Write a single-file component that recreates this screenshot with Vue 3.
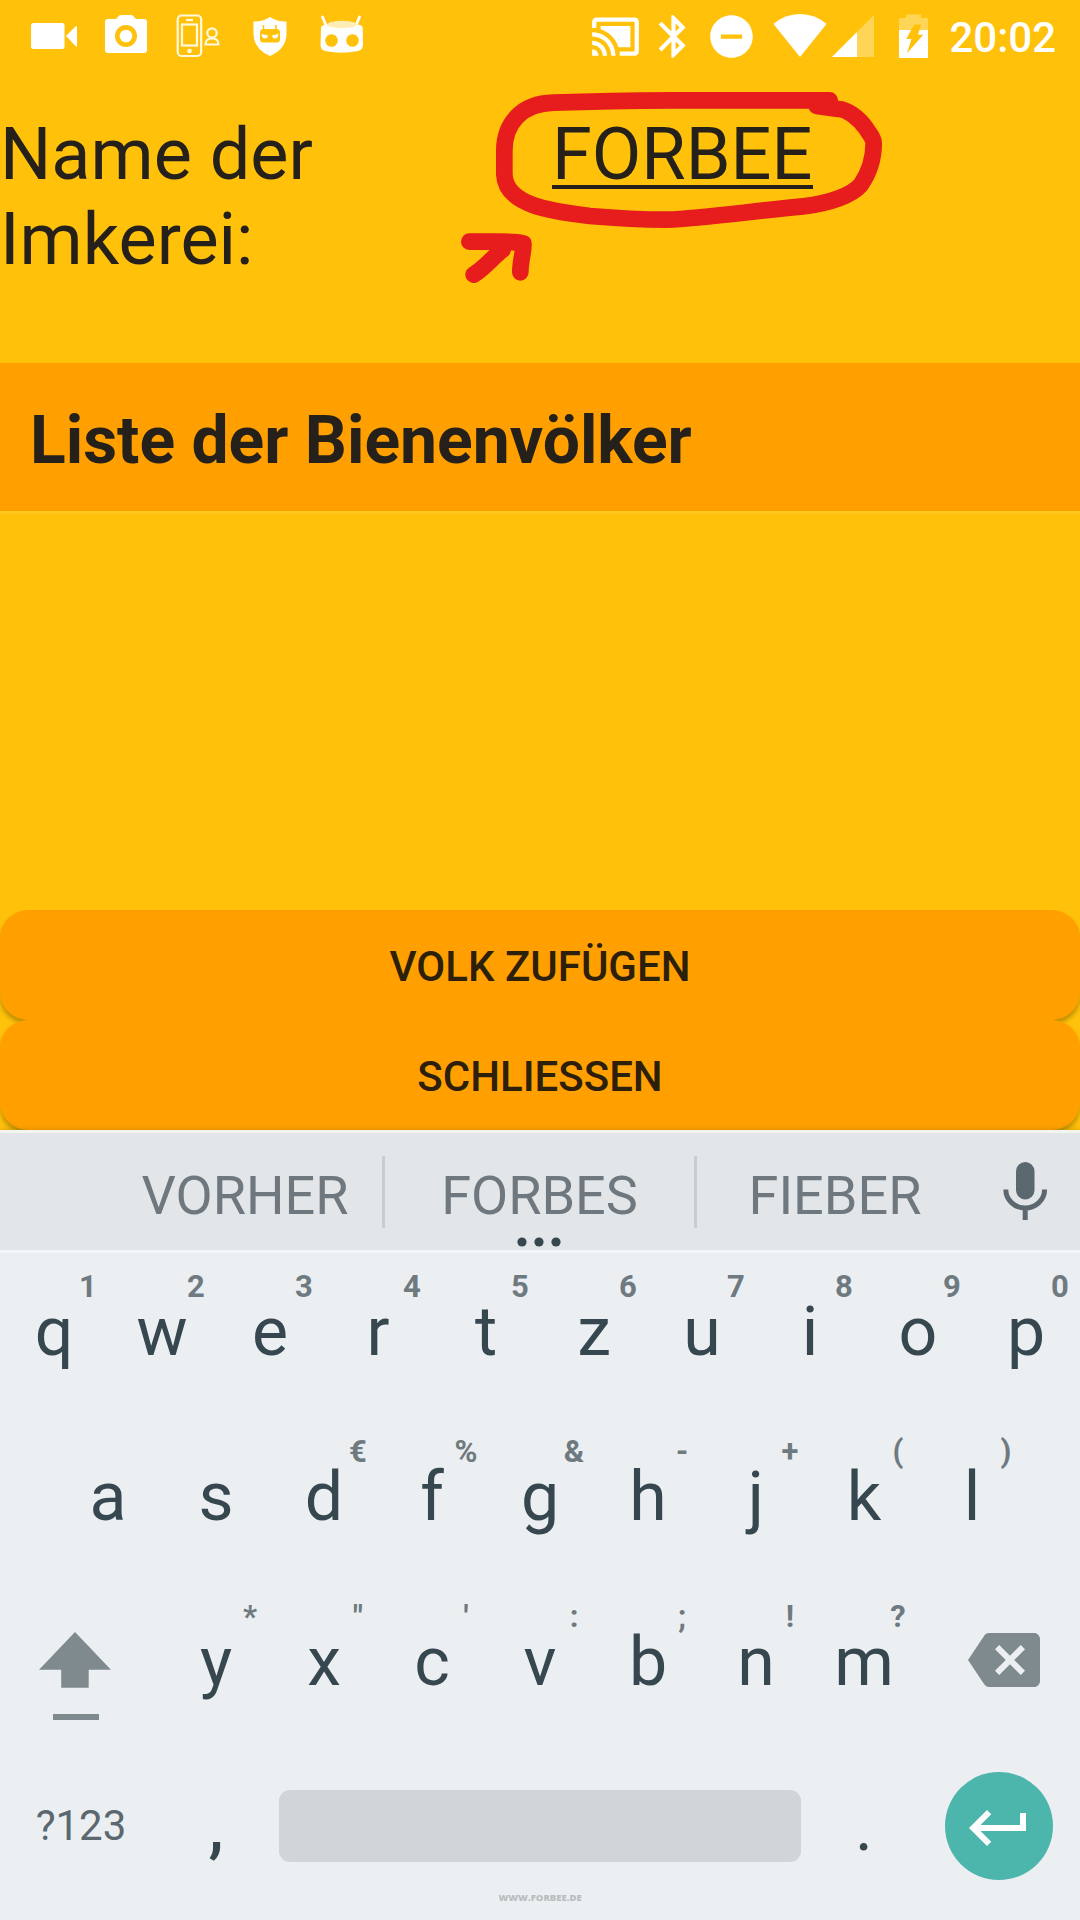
<script setup>
import { ref } from 'vue';

const name = ref("FORBEE");
const suggestions = ref(["VORHER", "FORBES", "FIEBER"]);

const topRow = [
  { key: "q", hint: "1" },
  { key: "w", hint: "2" },
  { key: "e", hint: "3" },
  { key: "r", hint: "4" },
  { key: "t", hint: "5" },
  { key: "z", hint: "6" },
  { key: "u", hint: "7" },
  { key: "i", hint: "8" },
  { key: "o", hint: "9" },
  { key: "p", hint: "0" }
];

const middleRow = [
  { key: "a", hint: "" },
  { key: "s", hint: "" },
  { key: "d", hint: "€" },
  { key: "f", hint: "%" },
  { key: "g", hint: "&" },
  { key: "h", hint: "-" },
  { key: "j", hint: "+" },
  { key: "k", hint: "(" },
  { key: "l", hint: ")" }
];

const bottomRow = [
  { key: "y", hint: "*" },
  { key: "x", hint: "\"" },
  { key: "c", hint: "'" },
  { key: "v", hint: ":" },
  { key: "b", hint: ";" },
  { key: "n", hint: "!" },
  { key: "m", hint: "?" }
];

function pick(word) {
  name.value = word;
}

function type(letter) {
  name.value += letter;
}

function erase() {
  name.value = name.value.slice(0, -1);
}
</script>

<template>
<div class="screen">
  <header class="status">
    <div class="notifications">
      <svg viewBox="18 0 72 72">
        <rect x="31" y="23" width="33.500" height="26" rx="2.500" />
        <path d="M66 36 75.500 26.500Q77 25.500 77 27V45.500Q77 47.500 75.500 46Z" />
      </svg>
      <svg viewBox="90 0 72 72">
        <path fill-rule="evenodd" d="M108 19h8l3-3.200q.8-.8 2-.8h10q1.200 0 2 .8l3 3.200h8q3 0 3 3v28q0 3-3 3h-36q-3 0-3-3V22q0-3 3-3zM126 25a11 11 0 1 0 0 22 11 11 0 1 0 0-22z" />
        <circle cx="126" cy="36" r="6.300" />
      </svg>
      <svg class="line" viewBox="162 0 72 72">
        <rect x="177.700" y="15.500" width="23.500" height="40.500" rx="4" />
        <rect x="182" y="24.500" width="15" height="21" />
        <path d="M186 20h7" />
        <circle class="solid" cx="189.500" cy="51" r="2.300" />
        <circle cx="212" cy="33" r="4.700" />
        <path d="M205.500 44.500q0-6 6.500-6t6.500 6z" />
      </svg>
      <svg viewBox="234 0 72 72">
        <path d="M270 17q8 5 16.500 4.500v13Q286 49 270 56 254 49 253.500 34.500v-13Q262 22 270 17z" />
        <path class="cut" d="M263.500 25v5M276 25v5" />
        <rect class="hole" x="260" y="29" width="20" height="13.500" rx="3.500" />
        <path d="M261.500 34l6.500 1.500q-.5 3-3 3-3 0-3.500-4.500zM278.500 34l-6.500 1.500q.5 3 3 3 3 0 3.500-4.500z" />
      </svg>
      <svg viewBox="306 0 72 72">
        <path d="M322.500 17l4 9.500M359.500 17l-4 9.500" stroke="#fff" stroke-width="2.800" stroke-linecap="round" />
        <path d="M321 28q0-2.500 4-3.200 17-3.500 34 0 3.500.7 3.700 3.200l.3 17q0 5-5 6-17 3.500-33 0-4.500-1-4.500-6z" />
        <ellipse cx="342" cy="24.500" rx="15" ry="3.700" fill="#ffedb5" />
        <circle class="hole" cx="331.500" cy="40.500" r="6.300" />
        <circle class="hole" cx="352.500" cy="40.500" r="6.300" />
      </svg>
    </div>

    <div class="system">
      <svg class="icon" viewBox="0 0 24 24">
        <path d="M1 18v3h3c0-1.660-1.340-3-3-3zm0-4v2c2.760 0 5 2.240 5 5h2c0-3.870-3.130-7-7-7zm18-7H5v1.630c3.960 1.280 7.090 4.410 8.370 8.370H19V7zM1 10v2c4.970 0 9 4.030 9 9h2c0-6.080-4.930-11-11-11zm20-7H3c-1.100 0-2 .9-2 2v3h2V5h18v14h-7v2h7c1.100 0 2-.9 2-2V5c0-1.100-.9-2-2-2z" />
      </svg>
      <svg class="icon" viewBox="0 0 24 24">
        <path d="M17.710 7.710L12 2h-1v7.590L6.410 5 5 6.410 10.590 12 5 17.590 6.410 19 11 14.410V22h1l5.710-5.710-4.300-4.290 4.300-4.290zM13 5.830l1.880 1.880L13 9.590V5.830zm1.880 10.460L13 18.170v-3.760l1.880 1.880z" />
      </svg>
      <svg class="icon" viewBox="0 0 24 24">
        <path d="M12 2C6.480 2 2 6.480 2 12s4.480 10 10 10 10-4.480 10-10S17.520 2 12 2zm5 11H7v-2h10v2z" />
      </svg>
      <svg class="wifi" viewBox="0 0 54 72">
        <path d="M27 57L.5 24Q12 14 27 14t26.500 10z" />
      </svg>
      <svg class="signal" viewBox="0 0 42 72">
        <path d="M42 15v42H0z" opacity=".32" />
        <path d="M25 32v25H0z" />
      </svg>
      <svg class="battery" viewBox="0 0 29 72">
        <path d="M0 18h7v-3.500h15V18h7v12h-8.600l1.600-5.500h-6.700L12.100 30H0z" opacity=".32" />
        <path d="M0 30h12.100L7.300 39h5.200L8 53.300l16.300-18.600H19l1.400-4.700H29v28H0z" />
      </svg>
      <span class="clock">20:02</span>
    </div>
  </header>

  <section class="form">
    <label>Name der Imkerei:</label>
    <div class="field"><span class="value">{{ name }}</span></div>
    <!-- red pen marks around the name -->
    <svg class="marker" viewBox="0 0 1380 660">
      <path d="M1169 61H700C560 62 430 65 340 68 245 70 193 130 193 212V283C196 375 330 394 450 408 530 415 600 419 680 419 790 415 930 394 1090 379 1170 370 1235 346 1262 315 1285 282 1301 245 1301 190 1301 172 1290 165 1278 145 1255 112 1220 88 1195 87L1130 78" />
      <path d="M88 485H180Q225 485 250 490C252 515 241 540 241 577M101 584C135 563 160 530 188 509" />
    </svg>
  </section>

  <h1>Liste der Bienenvölker</h1>
  <div class="list"></div>

  <div class="actions">
    <button>VOLK ZUFÜGEN</button>
    <button>SCHLIESSEN</button>
  </div>

  <div class="suggestions">
    <div v-for="word in suggestions" :key="word" class="word" @click="pick(word)">{{ word }}</div>
    <svg class="mic" viewBox="0 0 60 72">
      <rect x="22" y="6" width="18.500" height="37.500" rx="9.200" />
      <path d="M11.800 33.500a19.400 18.500 0 0 0 38.800 0M31.200 52v12" />
    </svg>
    <svg class="more" viewBox="0 0 44 10">
      <circle cx="5" cy="5" r="4.600" />
      <circle cx="22" cy="5" r="4.600" />
      <circle cx="39" cy="5" r="4.600" />
    </svg>
  </div>

  <div class="keyboard">
    <div class="row">
      <div v-for="item in topRow" :key="item.key" class="key" @click="type(item.key)">
        <span class="hint">{{ item.hint }}</span>
        <span class="letter">{{ item.key }}</span>
      </div>
    </div>
    <div class="row">
      <div v-for="item in middleRow" :key="item.key" class="key" @click="type(item.key)">
        <span class="hint">{{ item.hint }}</span>
        <span class="letter">{{ item.key }}</span>
      </div>
    </div>
    <div class="row">
      <div class="wide">
        <svg class="shift" viewBox="0 0 72 90">
          <path d="M36 0l36 37.700H49.700v18h-27.500v-18H0zM14 82h46v6H14z" />
        </svg>
      </div>
      <div v-for="item in bottomRow" :key="item.key" class="key" @click="type(item.key)">
        <span class="hint">{{ item.hint }}</span>
        <span class="letter">{{ item.key }}</span>
      </div>
      <div class="wide" @click="erase">
        <svg class="erase" viewBox="0 0 24 24">
          <path d="M22 3H7c-.69 0-1.230.35-1.590.88L0 12l5.410 8.110c.36.53.9.89 1.590.89h15c1.100 0 2-.9 2-2V5c0-1.100-.9-2-2-2zm-3 12.590L17.590 17 14 13.410 10.410 17 9 15.590 12.590 12 9 8.410 10.410 7 14 10.590 17.590 7 19 8.410 15.410 12 19 15.590z" />
        </svg>
      </div>
    </div>
    <div class="row">
      <div class="wide symbols">?123</div>
      <div class="key">
        <span class="hint"></span>
        <span class="letter comma">,</span>
      </div>
      <div class="space"></div>
      <div class="key">
        <span class="hint"></span>
        <span class="letter">.</span>
      </div>
      <div class="wide">
        <div class="enter">
          <svg viewBox="0 0 24 24">
            <path d="M19 7v4H5.830l3.580-3.590L8 6l-6 6 6 6 1.410-1.410L5.830 13H21V7z" />
          </svg>
        </div>
      </div>
    </div>
    <footer>WWW.FORBEE.DE</footer>
  </div>
</div>
</template>

<style>
body {
  margin: 0;
  background: #ffc10a;
}
</style>

<style scoped>
.screen {
  display: flex;
  flex-direction: column;
  width: 1080px;
  height: 1920px;
  overflow: hidden;
  background: #ffc10a;
  color: #25211a;
  font-family: Roboto, "Liberation Sans", sans-serif;
}

.status {
  display: flex;
  justify-content: space-between;
  height: 72px;
  padding: 0 24px 0 18px;
}

.status svg {
  fill: #fff;
}

.notifications {
  display: flex;
}

.notifications svg {
  width: 72px;
  height: 72px;
}

.notifications .line {
  fill: none;
  stroke: #fffadf;
  stroke-width: 2.2;
}

.notifications .solid {
  fill: #fffadf;
  stroke: none;
}

.notifications .hole {
  fill: #ffc10a;
}

.notifications .cut {
  stroke: #ffc10a;
  stroke-width: 1.5;
}

.system {
  display: flex;
  align-items: center;
}

.system .icon {
  width: 51px;
  height: 51px;
  margin-right: 7px;
}

.system .wifi {
  width: 54px;
  height: 72px;
  margin: 0 5px 0 9px;
}

.system .signal {
  width: 42px;
  height: 72px;
  margin-right: 25px;
}

.system .battery {
  width: 29px;
  height: 72px;
  margin-right: 21px;
}

.clock {
  padding-top: 4px;
  color: #fff;
  font-size: 42px;
  font-weight: 500;
  line-height: 50px;
}

.form {
  position: relative;
  display: grid;
  grid-template-columns: 540px 1fr;
  height: 251px;
  padding-top: 40px;
  box-sizing: border-box;
  font-size: 72px;
  line-height: 85px;
}

.form label {
  width: 400px;
}

.field {
  padding-left: 12px;
}

.value {
  display: inline-block;
  height: 73px;
  padding-right: 1px;
  border-bottom: 4px solid #25211a;
}

.marker {
  position: absolute;
  left: 440px;
  top: 8px;
  width: 460px;
  height: 220px;
  fill: none;
  stroke: #e71c1c;
  stroke-width: 50;
  stroke-linecap: round;
  stroke-linejoin: round;
}

h1 {
  height: 148px;
  margin: 40px 0 0;
  padding: 39px 30px 0;
  box-sizing: border-box;
  background: #ffa000;
  font-size: 66px;
  font-weight: 700;
  line-height: 78px;
}

.list {
  flex: 1;
  border-top: 3px solid #ffc61c;
}

.actions {
  display: flex;
  flex-direction: column;
  overflow: hidden;
}

button {
  height: 110px;
  padding: 3px 0 0;
  border: 0;
  border-radius: 28px;
  background: #ffa000;
  box-shadow: 0 4px 4px rgba(90, 70, 0, 0.4);
  color: #2d200b;
  font-family: inherit;
  font-size: 42px;
  font-weight: 500;
  line-height: 50px;
}

.suggestions {
  position: relative;
  display: grid;
  grid-template-columns: 277px 312px 276px 1fr;
  align-items: center;
  height: 123px;
  padding-left: 108px;
  box-sizing: border-box;
  border-top: 3px solid #f4f4ef;
  border-bottom: 3px solid #f4f7fa;
  background: #e3e6e9;
  box-shadow: 0 -1px 5px rgba(0, 0, 0, 0.12);
}

.word {
  height: 72px;
  border-right: 3px solid #c9cdd0;
  color: #6e787e;
  font-size: 54px;
  line-height: 79px;
  text-align: center;
}

.word:nth-child(3) {
  border-right: 0;
}

.mic {
  width: 60px;
  height: 72px;
  margin-left: 21px;
  fill: #5b686f;
}

.mic path {
  fill: none;
  stroke: #5b686f;
  stroke-width: 5;
}

.more {
  position: absolute;
  left: 517px;
  bottom: 3px;
  width: 44px;
  height: 10px;
  fill: #37474f;
}

.keyboard {
  position: relative;
  height: 667px;
  background: #ebeff2;
  color: #37474f;
}

.row {
  display: flex;
  justify-content: center;
  height: 165px;
}

.key {
  display: flex;
  flex-direction: column;
  width: 108px;
  padding-top: 16px;
  box-sizing: border-box;
}

.hint {
  align-self: flex-end;
  width: 40px;
  height: 36px;
  color: #6f7a80;
  font-size: 31px;
  font-weight: 700;
  line-height: 36px;
  text-align: center;
}

.letter {
  margin-top: -13px;
  font-size: 68px;
  line-height: 80px;
  text-align: center;
}

.comma {
  font-weight: 500;
}

.wide {
  width: 162px;
}

.shift {
  display: block;
  width: 72px;
  height: 90px;
  margin: 49px 0 0 39px;
  fill: #7f8a8e;
}

.erase {
  display: block;
  width: 72px;
  height: 72px;
  margin: 41px 0 0 50px;
  fill: #7f8a8e;
}

.symbols {
  padding-top: 53px;
  box-sizing: border-box;
  color: #5b686f;
  font-size: 42px;
  line-height: 50px;
  text-align: center;
}

.space {
  width: 522px;
  height: 72px;
  margin: 42px 9px 0;
  border-radius: 11px;
  background: #d1d5d8;
}

.enter {
  width: 108px;
  height: 108px;
  margin: 24px 0 0 27px;
  border-radius: 50%;
  background: #4db6ac;
}

.enter svg {
  display: block;
  width: 72px;
  height: 72px;
  padding: 20px 0 0 18px;
  fill: #fff;
}

footer {
  margin-top: -21px;
  color: #b9bec0;
  font-family: "Open Sans", sans-serif;
  font-size: 9.5px;
  font-weight: 800;
  line-height: 12px;
  text-align: center;
}
</style>
